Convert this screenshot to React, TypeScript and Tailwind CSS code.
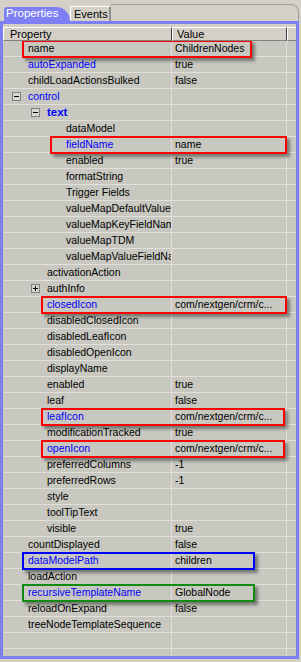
import React from 'react';

interface Prop {
    label: string;
    value?: string;
    level: 0 | 1 | 2;
    blue?: boolean;
    bold?: boolean;
    expander?: '+' | '-';
    box?: string;
}

const PATH = 'com/nextgen/crm/c...';

const rows: Prop[] = [
    { label: 'name', value: 'ChildrenNodes', level: 0, box: 'left-[19px] w-[230px] border-[#ff0000]' },
    { label: 'autoExpanded', value: 'true', level: 0, blue: true },
    { label: 'childLoadActionsBulked', value: 'false', level: 0 },
    { label: 'control', level: 0, blue: true, expander: '-' },
    { label: 'text', level: 1, blue: true, bold: true, expander: '-' },
    { label: 'dataModel', level: 2 },
    { label: 'fieldName', value: 'name', level: 2, blue: true, box: 'left-[47px] w-[237px] border-[#ff0000]' },
    { label: 'enabled', value: 'true', level: 2 },
    { label: 'formatString', level: 2 },
    { label: 'Trigger Fields', level: 2 },
    { label: 'valueMapDefaultValue', level: 2 },
    { label: 'valueMapKeyFieldName', level: 2 },
    { label: 'valueMapTDM', level: 2 },
    { label: 'valueMapValueFieldName', level: 2 },
    { label: 'activationAction', level: 1 },
    { label: 'authInfo', level: 1, expander: '+' },
    { label: 'closedIcon', value: PATH, level: 1, blue: true, box: 'left-[38px] w-[246px] border-[#ff0000]' },
    { label: 'disabledClosedIcon', level: 1 },
    { label: 'disabledLeafIcon', level: 1 },
    { label: 'disabledOpenIcon', level: 1 },
    { label: 'displayName', level: 1 },
    { label: 'enabled', value: 'true', level: 1 },
    { label: 'leaf', value: 'false', level: 1 },
    { label: 'leafIcon', value: PATH, level: 1, blue: true, box: 'left-[38px] w-[244px] border-[#ff0000]' },
    { label: 'modificationTracked', value: 'true', level: 1 },
    { label: 'openIcon', value: PATH, level: 1, blue: true, box: 'left-[38px] w-[244px] border-[#ff0000]' },
    { label: 'preferredColumns', value: '-1', level: 1 },
    { label: 'preferredRows', value: '-1', level: 1 },
    { label: 'style', level: 1 },
    { label: 'toolTipText', level: 1 },
    { label: 'visible', value: 'true', level: 1 },
    { label: 'countDisplayed', value: 'false', level: 0 },
    { label: 'dataModelPath', value: 'children', level: 0, blue: true, box: 'left-[19px] w-[233px] border-[#0000ff]' },
    { label: 'loadAction', level: 0 },
    { label: 'recursiveTemplateName', value: 'GlobalNode', level: 0, blue: true, box: 'left-[19px] w-[233px] border-[#118a11]' },
    { label: 'reloadOnExpand', value: 'false', level: 0 },
    { label: 'treeNodeTemplateSequence', level: 0 },
];

const textIndent = ['pl-[25px]', 'pl-[44px]', 'pl-[63px]'];
const expanderIndent = ['pl-[9px]', 'pl-[28px]', 'pl-[47px]'];

function Expander({ sign }: { sign: '+' | '-' }) {
    return (
        <span className="relative w-[9px] h-[9px] mr-[7px] border border-[#808080] bg-[#d8d8d0] shrink-0">
            <span className="absolute left-[1px] top-[3px] w-[5px] h-[1px] bg-black" />
            {sign === '+' && <span className="absolute left-[3px] top-[1px] w-[1px] h-[5px] bg-black" />}
        </span>
    );
}

function Row({ row }: { row: Prop }) {
    return (
        <div className="relative flex h-[16px] border-b border-[#e2dfd8] shrink-0">
            <div
                className={`flex items-center w-[169px] border-r border-[#e2dfd8] overflow-hidden whitespace-nowrap ${
                    row.expander ? expanderIndent[row.level] : textIndent[row.level]
                }`}
            >
                {row.expander && <Expander sign={row.expander} />}
                <span className={`${row.blue ? 'text-[#0000ff]' : 'text-black'} ${row.bold ? 'font-bold text-[11.5px]' : ''}`}>
                    {row.label}
                </span>
            </div>
            <div className="flex items-center w-[115px] pl-[3px] border-r border-[#e2dfd8] whitespace-nowrap overflow-hidden">
                {row.value}
            </div>
            <div className="flex-1" />
            {/* annotation frame */}
            {row.box && (
                <div
                    className={`absolute z-10 top-[-1px] bottom-[-2px] border-2 shadow-[3px_3px_3px_rgba(0,0,0,0.4)] ${row.box}`}
                />
            )}
        </div>
    );
}

function EmptyRow() {
    return (
        <div className="flex h-[16px] border-b border-[#e2dfd8] shrink-0">
            <div className="w-[169px] border-r border-[#e2dfd8]" />
            <div className="w-[115px] border-r border-[#e2dfd8]" />
            <div className="flex-1" />
        </div>
    );
}

export default function App() {
    return (
        <div className="w-[301px] h-[662px] bg-[#d4d0c8] text-[10.5px] leading-none text-black font-['Liberation_Sans',Arial,sans-serif] overflow-hidden">
            {/* Tab strip */}
            <div className="flex items-end h-[21px] pl-[4px]">
                <div className="flex items-center h-[14px] w-[66px] pl-[2px] bg-[#7f7ff4] rounded-tl-[3px] rounded-tr-[14px] text-white text-[11.5px]">
                    Properties
                </div>
                <div className="flex items-center h-[15px] w-[41px] pl-[3px] border-t border-l border-white border-r-2 border-r-[#909090] text-[11px] whitespace-nowrap">
                    Events
                </div>
                <div className="flex-1 h-[17px] mr-[2px] border-t border-r border-[#a0a0a0] rounded-tr-[8px]" />
            </div>

            {/* Property sheet */}
            <div className="flex flex-col w-[299px] h-[638px] border-[3px] border-[#7f7ff4]">
                <div className="flex h-[14px] mt-[3px] shrink-0 text-[11px]">
                    <div className="flex items-center w-[169px] pl-[6px] border-t border-l border-white border-b border-b-[#808080] border-r border-r-[#404040]">
                        Property
                    </div>
                    <div className="flex items-center w-[115px] pl-[4px] border-t border-l border-white border-b border-b-[#808080] border-r border-r-[#404040]">
                        Value
                    </div>
                    <div className="flex-1 border-t border-l border-white border-b border-b-[#808080]" />
                </div>
                <div className="flex flex-col flex-1 bg-[#c8c8c0] overflow-hidden">
                    {rows.map((row, i) => (
                        <Row key={i} row={row} />
                    ))}
                    <EmptyRow />
                    <EmptyRow />
                </div>
            </div>
        </div>
    );
}
